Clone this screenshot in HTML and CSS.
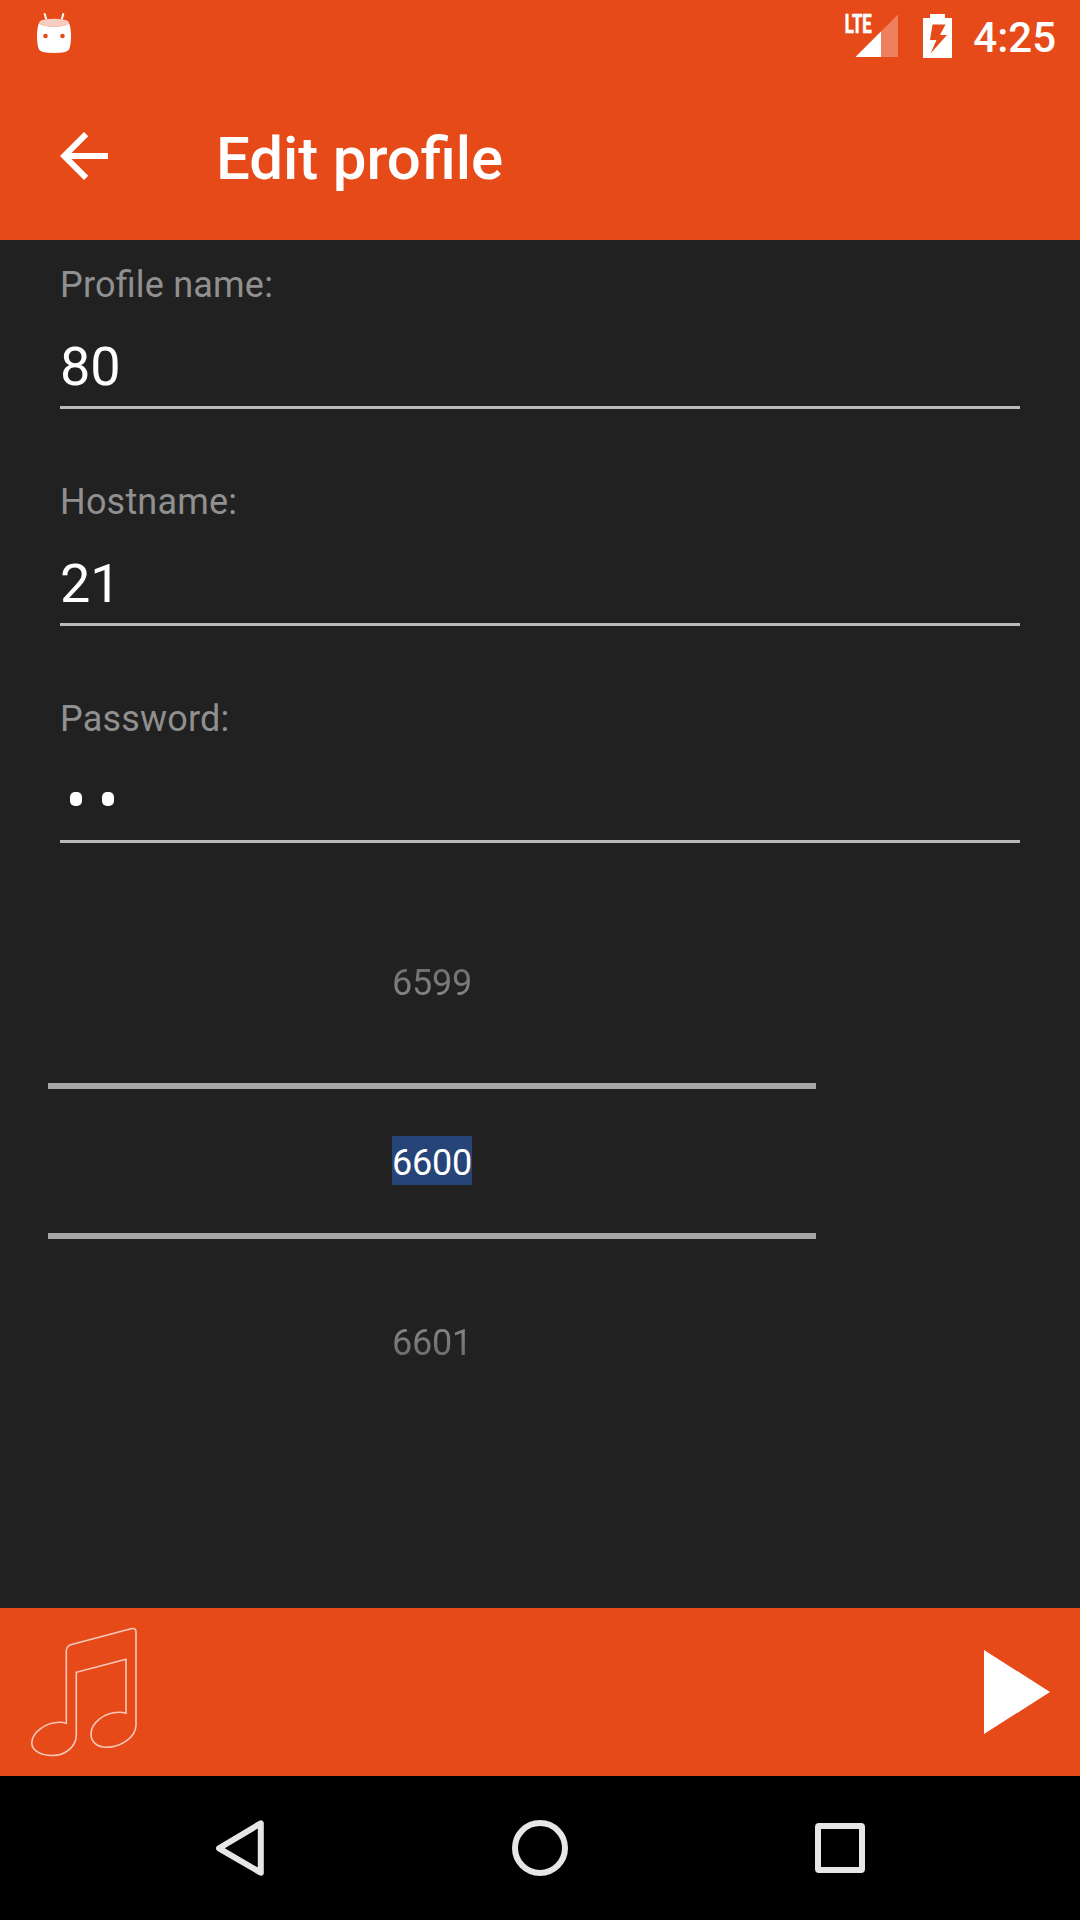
FILE: index.html
```html
<!DOCTYPE html>
<html lang="en">
<head>
<meta charset="utf-8">
<title>Edit profile</title>
<link rel="stylesheet" href="styles.css">
</head>
<body>
<div class="screen">
  <header class="header">
    <div class="status-bar">
      <svg class="status-debug" width="36" height="42" viewBox="36 12 36 42">
        <path d="M44.7 14l2 7M63.3 14l-2 7" stroke="#fff" stroke-width="2" stroke-linecap="round"/>
        <path fill="#fff" d="M39.5 22Q37 27 37 36t2 13.500Q41 53 54 53t15-3.500Q71 45 71 36t-2.500-14Z"/>
        <ellipse cx="54" cy="22.700" rx="14.800" ry="4" fill="#e64a19"/>
        <ellipse cx="54" cy="22.700" rx="14.800" ry="4" fill="#fff" fill-opacity=".72"/>
        <circle cx="45.500" cy="36" r="2.300" fill="#e64a19"/><circle cx="62.500" cy="36" r="2.300" fill="#e64a19"/>
      </svg>
      <div class="status-right">
        <svg class="signal" width="60" height="60" viewBox="840 0 60 60">
          <text class="lte" x="844.800" y="33" textLength="27" lengthAdjust="spacingAndGlyphs">LTE</text>
          <path fill="#fff" fill-opacity=".3" d="M898 14.500V57h-42.500Z"/>
          <path fill="#fff" d="M881 31.500V57h-25.500Z"/>
        </svg>
        <svg class="battery" width="29" height="44" viewBox="923 14 29 44">
          <path fill="#fff" fill-rule="evenodd" d="M930 14h15v4h7v40h-29V18h7ZM932.500 24.500L930 40h6.500l-6 13.500L947 35h-7l5.500-10.500Z"/>
        </svg>
        <span class="clock">4:25</span>
      </div>
    </div>
    <div class="toolbar">
      <svg class="back" width="48" height="48" viewBox="4 4 16 16"><path fill="#fff" d="M20 11H7.830l5.590-5.590L12 4l-8 8 8 8 1.410-1.410L7.830 13H20v-2z"/></svg>
      <h1 class="title">Edit profile</h1>
    </div>
  </header>
  <main class="content">
    <section class="field">
      <div class="label">Profile name:</div>
      <div class="value">80</div>
    </section>
    <section class="field">
      <div class="label">Hostname:</div>
      <div class="value">21</div>
    </section>
    <section class="field">
      <div class="label">Password:</div>
      <div class="value masked"><span class="dot"></span><span class="dot"></span></div>
    </section>
    <div class="picker">
      <div class="option previous"><span>6599</span></div>
      <div class="option current"><span>6600</span></div>
      <div class="option next"><span>6601</span></div>
    </div>
  </main>
  <div class="player">
    <svg width="108" height="132" viewBox="30 1626 108 132" fill="none" stroke="#fff" stroke-opacity=".7" stroke-width="1.600">
      <path d="M66.300 1723.300V1651Q66.300 1646 71.500 1644.500L131 1628.700Q136 1627.500 136 1632V1725C136 1737 121 1747.300 106.500 1747.300C97 1747.300 91 1742 91 1734C91 1723 104 1712.300 119 1712.300Q123 1712.300 126 1713.200V1659.200L76.300 1672.300V1735C76.300 1746 66 1755.500 52.500 1755.500C40 1755.500 31.800 1750 31.800 1743C31.800 1733 45 1722.300 60 1722.300Q63.500 1722.300 66.300 1723.300Z"/>
    </svg>
    <svg width="66" height="84" viewBox="0 0 66 84"><path fill="#fff" d="M0 0L66 42L0 84Z"/></svg>
  </div>
  <nav class="navigation">
    <svg width="48" height="56" viewBox="216 1820 48 56"><path d="M219 1848.300L260.800 1823.300V1872.700Z" fill="none" stroke="#e6e6e6" stroke-width="6" stroke-linejoin="round"/></svg>
    <svg width="56" height="56" viewBox="0 0 56 56"><circle cx="28" cy="28" r="25" fill="none" stroke="#e6e6e6" stroke-width="6"/></svg>
    <svg width="50" height="50" viewBox="0 0 50 50"><path fill="#e6e6e6" fill-rule="evenodd" d="M4 0h42a4 4 0 0 1 4 4v42a4 4 0 0 1-4 4H4a4 4 0 0 1-4-4V4a4 4 0 0 1 4-4ZM6 6v38h38V6Z"/></svg>
  </nav>
</div>
</body>
</html>
```
FILE: styles.css
```css
* {
  box-sizing: border-box;
}

body {
  margin: 0;
  background: #212121;
  color: #fff;
  font-family: Roboto, sans-serif;
}

svg {
  display: block;
  flex: none;
}

.screen {
  display: flex;
  flex-direction: column;
  width: 1080px;
  height: 1920px;
  overflow: hidden;
}

.header {
  height: 240px;
  background: #e64a19;
}

.status-bar {
  display: flex;
  justify-content: space-between;
  height: 72px;
  padding: 0 24px 0 36px;
}

.status-debug {
  margin-top: 12px;
}

.status-right {
  display: flex;
}

.battery {
  margin: 14px 21px 0 23px;
}

.lte {
  fill: #fff;
  stroke: #fff;
  stroke-width: 0.7px;
  font-size: 25px;
  font-weight: 700;
}

.clock {
  margin-top: 13px;
  font-size: 42px;
  font-weight: 500;
  line-height: 50px;
}

.toolbar {
  display: flex;
  padding: 60px 60px 0;
}

.title {
  margin: -8px 0 0 108px;
  font-size: 60px;
  font-weight: 500;
  line-height: 70px;
  letter-spacing: -0.1px;
  font-feature-settings: "liga" 1;
}

.content {
  flex: 1;
}

.field {
  height: 217px;
  padding: 24px 60px 0;
}

.label {
  color: #909090;
  font-size: 36px;
  line-height: 42px;
  letter-spacing: 0.2px;
  font-feature-settings: "liga" 1;
}

.value {
  height: 75px;
  margin-top: 28px;
  border-bottom: 3px solid #bababa;
  font-size: 54px;
  line-height: 66px;
}

.masked {
  display: flex;
  gap: 20px;
  padding: 24px 10px 0;
}

.dot {
  width: 12px;
  height: 14px;
  border-radius: 5px;
  background: #fff;
}

.picker {
  width: 768px;
  margin-left: 48px;
  font-size: 36px;
  line-height: 49px;
  letter-spacing: -0.2px;
  text-align: center;
}

.option span {
  display: inline-block;
  width: 80px;
}

.previous {
  height: 192px;
  padding-top: 68px;
}

.current {
  height: 156px;
  padding-top: 47px;
  border: solid #a6a6a6;
  border-width: 6px 0;
}

.current span {
  height: 49px;
  padding-top: 3px;
  background: #264478;
  line-height: 48px;
}

.next {
  padding-top: 80px;
}

.previous span,
.next span {
  background: linear-gradient(#686868, #8e8e8e);
  background-clip: text;
  color: transparent;
}

.next span {
  background-image: linear-gradient(#8e8e8e, #626262);
}

.player {
  display: flex;
  align-items: center;
  justify-content: space-between;
  height: 168px;
  padding: 0 30px;
  background: #e64a19;
}

.navigation {
  display: flex;
  align-items: center;
  justify-content: space-between;
  height: 144px;
  padding: 0 215px 0 216px;
  background: #000;
}
```
